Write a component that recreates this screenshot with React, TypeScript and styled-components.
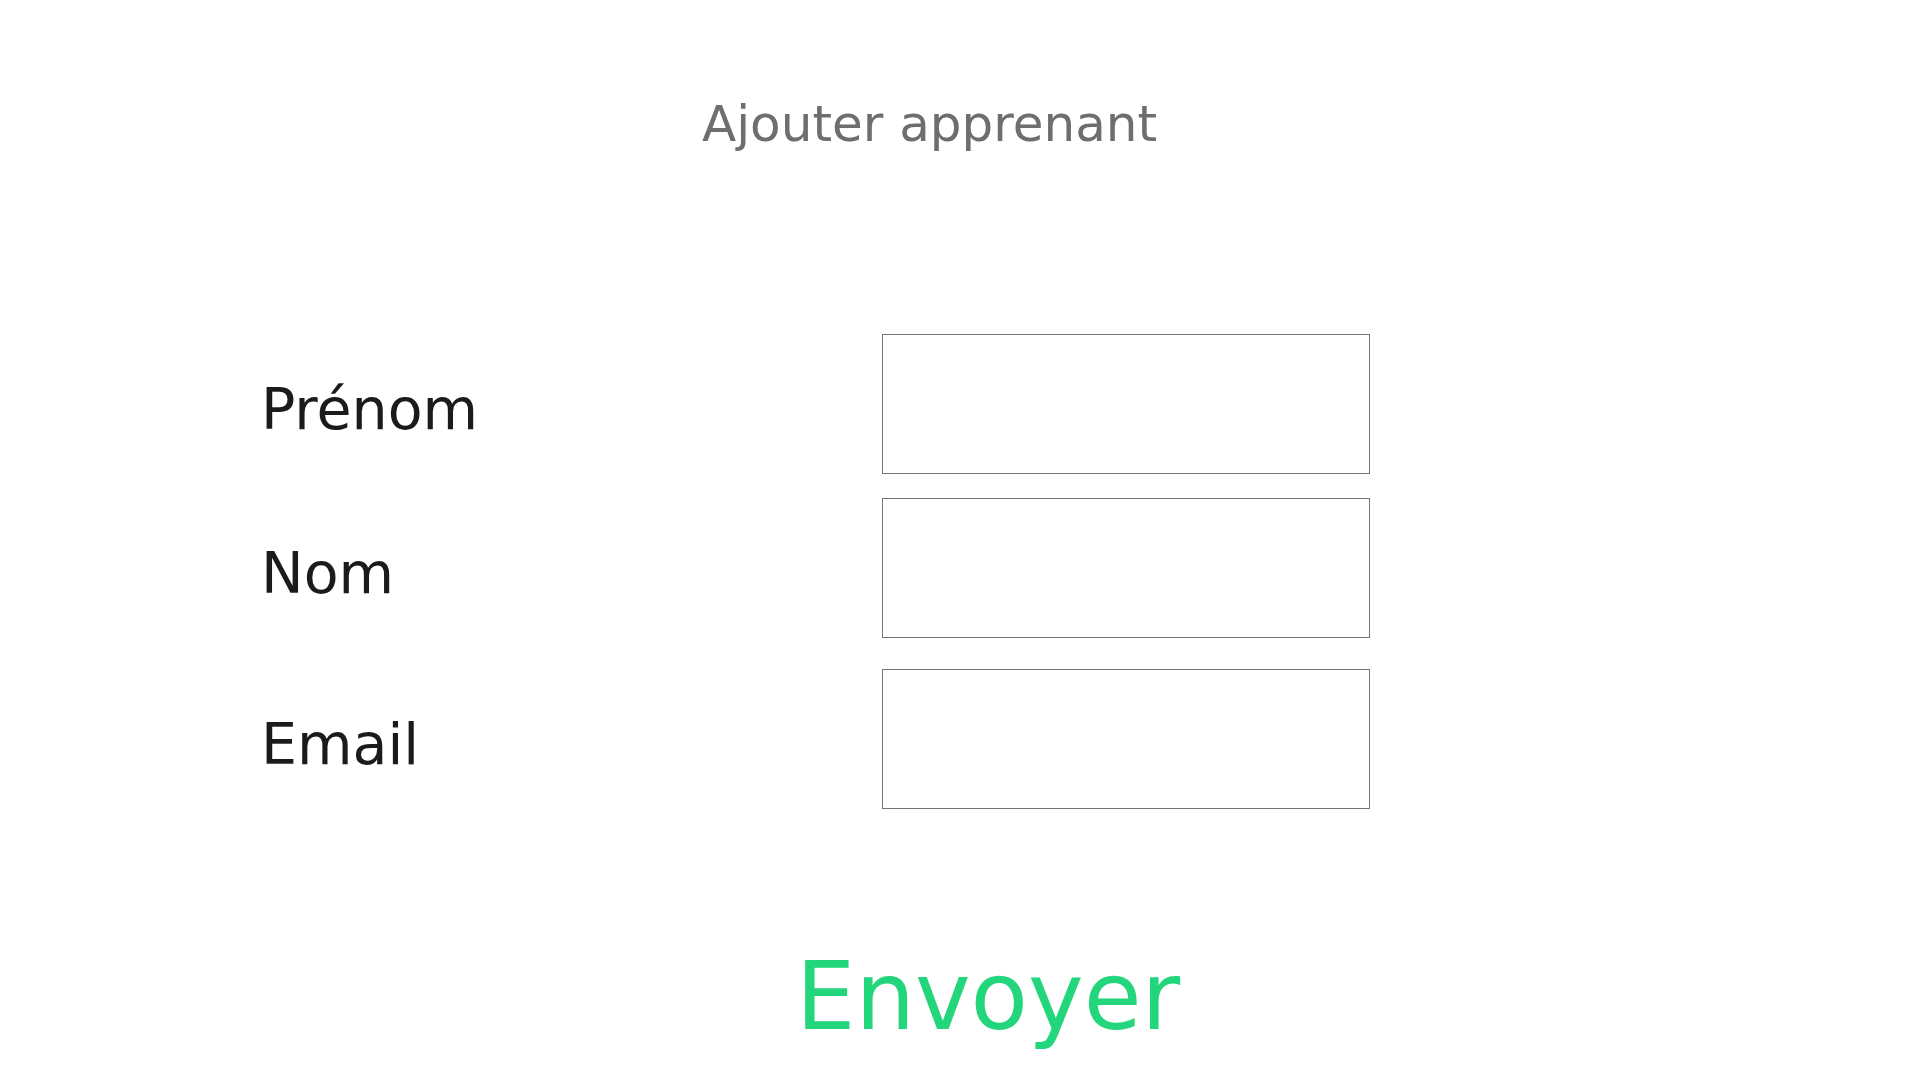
import React from "react";
import styled, { createGlobalStyle } from "styled-components";

const GlobalStyle = createGlobalStyle`
  html, body {
    margin: 0;
    padding: 0;
    background: #ffffff;
    font-family: "DejaVu Sans", "Liberation Sans", sans-serif;
  }
  * { box-sizing: border-box; }
`;

const Page = styled.main`
  display: flex;
  flex-direction: column;
  align-items: flex-start;
  padding-top: 95px;
  width: 1920px;
  height: 1080px;
  overflow: hidden;
`;

const Title = styled.h1`
  margin: 0 0 0 702px;
  font-size: 50px;
  line-height: 58px;
  font-weight: 400;
  color: #6e6e6e;
`;

const Form = styled.form`
  display: flex;
  flex-direction: column;
  align-items: flex-start;
  margin-top: 181px;
  padding-left: 261px;
`;

const Row = styled.div<{ $gap: number }>`
  display: grid;
  grid-template-columns: 621px 488px;
  align-items: center;
  margin-top: ${(p) => p.$gap}px;
`;

const Label = styled.label`
  font-size: 57px;
  line-height: 70px;
  padding-top: 10px;
  color: #1b1b1b;
`;

const Input = styled.input`
  width: 488px;
  height: 140px;
  margin: 0;
  border: 1px solid #767676;
  border-radius: 0;
  background: #ffffff;
  font-family: inherit;
  font-size: 24px;
  padding: 0 8px;
  outline: none;
`;

const Submit = styled.button`
  margin: 141px 0 0 796px;
  padding: 0;
  border: none;
  background: none;
  font-family: "DejaVu Sans", "Liberation Sans", sans-serif;
  font-size: 94px;
  line-height: 94px;
  color: #23d67b;
  cursor: pointer;
`;

const fields = [
  { id: "prenom", label: "Prénom", type: "text", gap: 0 },
  { id: "nom", label: "Nom", type: "text", gap: 24 },
  { id: "email", label: "Email", type: "email", gap: 31 },
];

export default function App() {
  return (
    <>
      <GlobalStyle />
      <Page>
        <Title>Ajouter apprenant</Title>
        <Form onSubmit={(e) => e.preventDefault()}>
          {fields.map((f) => (
            <Row key={f.id} $gap={f.gap}>
              <Label htmlFor={f.id}>{f.label}</Label>
              <Input id={f.id} name={f.id} type={f.type} />
            </Row>
          ))}
        </Form>
        <Submit type="submit">Envoyer</Submit>
      </Page>
    </>
  );
}
